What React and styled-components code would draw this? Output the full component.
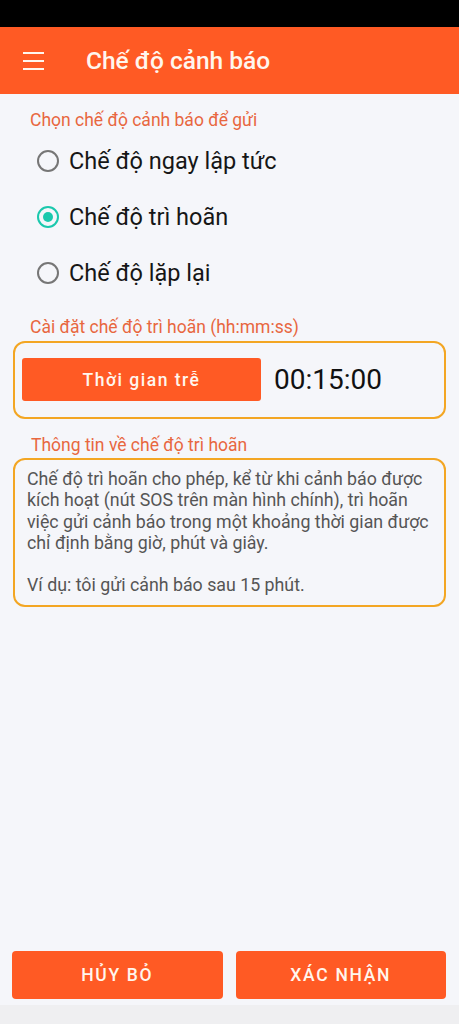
import React, { useState } from "react";
import styled, { createGlobalStyle } from "styled-components";

const GlobalStyle = createGlobalStyle`
  html, body {
    margin: 0;
    padding: 0;
    background: #f5f6fa;
    font-family: Roboto, "Noto Sans", "Liberation Sans", sans-serif;
  }
  * { box-sizing: border-box; }
`;

const Page = styled.div`
  display: flex;
  flex-direction: column;
  min-height: 1024px;
  background: #f5f6fa;
`;

const StatusBar = styled.div`
  height: 27px;
  background: #000;
`;

const AppBar = styled.header`
  height: 67px;
  background: #ff5a24;
  display: flex;
  align-items: center;
  padding-left: 23px;
`;

const MenuButton = styled.button`
  border: 0;
  padding: 0;
  background: none;
  display: flex;
  width: 21px;
  height: 18px;
  flex-direction: column;
  justify-content: space-between;
  margin-right: 42px;
`;

const MenuLine = styled.span`
  display: block;
  height: 2px;
  width: 21px;
  background: #fff6ee;
`;

const Title = styled.h1`
  margin: 0;
  font-size: 24.5px;
  font-weight: 500;
  color: #fff6ee;
`;

const Content = styled.main`
  flex: 1;
  padding: 16px 13px 0;
  display: flex;
  flex-direction: column;
`;

const SectionLabel = styled.div`
  font-size: 17.5px;
  line-height: 20px;
  color: #e8673f;
  margin: ${(p) => p.$top || 0}px 0 ${(p) => p.$bottom || 0}px ${(p) => p.$indent || 17}px;
`;

const RadioList = styled.div`
  display: flex;
  flex-direction: column;
  padding-left: 24px;
  margin-top: 3px;
`;

const RadioRow = styled.label`
  display: flex;
  align-items: center;
  height: 56px;
  gap: 10px;
  cursor: pointer;
`;

const RadioCircle = styled.span`
  flex: none;
  width: 22px;
  height: 22px;
  border-radius: 50%;
  border: 2px solid ${(p) => (p.$checked ? "#1bc8ad" : "#767676")};
  display: flex;
  align-items: center;
  justify-content: center;
  &::after {
    content: "";
    width: 10px;
    height: 10px;
    border-radius: 50%;
    background: #1bc8ad;
    display: ${(p) => (p.$checked ? "block" : "none")};
  }
`;

const RadioText = styled.span`
  font-size: 23.5px;
  color: #161616;
`;

const Card = styled.div`
  border: 2px solid #f3a623;
  border-radius: 12px;
  background: #f5f6fa;
`;

const DelayCard = styled(Card)`
  display: flex;
  align-items: center;
  gap: 13px;
  padding: 15px 7px 16px;
`;

const DelayButton = styled.button`
  flex: none;
  width: 239px;
  height: 43px;
  border: 0;
  border-radius: 3px;
  background: #ff5a24;
  color: #fff6ee;
  font-family: inherit;
  font-size: 17.5px;
  font-weight: 500;
  letter-spacing: 1.5px;
`;

const TimeValue = styled.span`
  font-size: 28px;
  color: #111;
`;

const InfoCard = styled(Card)`
  padding: 8px 12px 9px;
  color: #555;
  font-size: 17.8px;
  line-height: 21.3px;
`;

const Paragraph = styled.p`
  margin: 0;
  & + & { margin-top: 21.3px; }
`;

const Footer = styled.footer`
  display: flex;
  flex-direction: column;
`;

const ButtonRow = styled.div`
  display: grid;
  grid-template-columns: 1fr 1fr;
  gap: 13px;
  padding: 0 13px 0 12px;
`;

const ActionButton = styled.button`
  height: 48px;
  border: 0;
  border-radius: 4px;
  background: #ff5a24;
  color: #fff6ee;
  font-family: inherit;
  font-size: 17.5px;
  font-weight: 500;
  letter-spacing: 1.7px;
`;

const NavStrip = styled.div`
  height: 19px;
  margin-top: 6px;
  background: #efeff1;
`;

const modes = ["Chế độ ngay lập tức", "Chế độ trì hoãn", "Chế độ lặp lại"];

export default function App() {
  const [mode, setMode] = useState(1);
  return (
    <Page>
      <GlobalStyle />
      <StatusBar />
      <AppBar>
        <MenuButton aria-label="menu">
          <MenuLine />
          <MenuLine />
          <MenuLine />
        </MenuButton>
        <Title>Chế độ cảnh báo</Title>
      </AppBar>
      <Content>
        <SectionLabel>Chọn chế độ cảnh báo để gửi</SectionLabel>
        <RadioList>
          {modes.map((m, i) => (
            <RadioRow key={m} onClick={() => setMode(i)}>
              <RadioCircle $checked={mode === i} />
              <RadioText>{m}</RadioText>
            </RadioRow>
          ))}
        </RadioList>
        <SectionLabel $top={16} $bottom={4}>
          Cài đặt chế độ trì hoãn (hh:mm:ss)
        </SectionLabel>
        <DelayCard>
          <DelayButton>Thời gian trễ</DelayButton>
          <TimeValue>00:15:00</TimeValue>
        </DelayCard>
        <SectionLabel $top={16} $bottom={3} $indent={18}>
          Thông tin về chế độ trì hoãn
        </SectionLabel>
        <InfoCard>
          <Paragraph>
            Chế độ trì hoãn cho phép, kể từ khi cảnh báo được kích hoạt (nút SOS
            trên màn hình chính), trì hoãn việc gửi cảnh báo trong một khoảng
            thời gian được chỉ định bằng giờ, phút và giây.
          </Paragraph>
          <Paragraph>Ví dụ: tôi gửi cảnh báo sau 15 phút.</Paragraph>
        </InfoCard>
      </Content>
      <Footer>
        <ButtonRow>
          <ActionButton>HỦY BỎ</ActionButton>
          <ActionButton>XÁC NHẬN</ActionButton>
        </ButtonRow>
        <NavStrip />
      </Footer>
    </Page>
  );
}
